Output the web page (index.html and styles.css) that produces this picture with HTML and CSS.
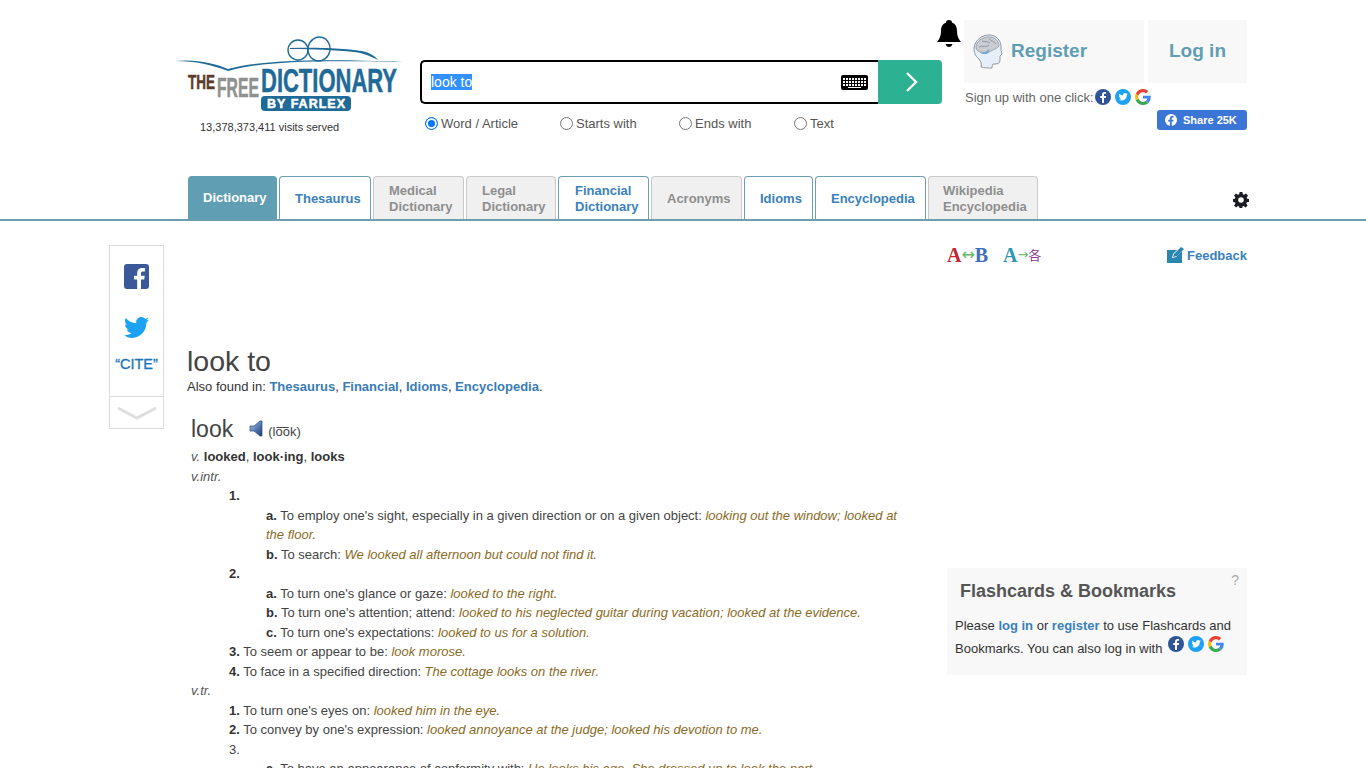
FILE: index.html
```html
<!DOCTYPE html>
<html lang="en">
<head>
<meta charset="utf-8">
<title>look to</title>
<link rel="stylesheet" href="styles.css">
</head>
<body>
<header class="top">
  <div class="brand">
    <svg class="logo" width="230" height="76" viewBox="0 0 230 76">
      <path d="M1 25C22 23 40 27 54 33C85 25 135 22 229 26C140 24 90 25 54 35C38 29 22 25 1 25Z" fill="#1f6a97"/>
      <path d="M116 12C150 11 180 13 192 16C198 18 202 21 204 24C198 21 190 17 180 16C160 14 140 13 116 13Z" fill="#1f6a97"/>
      <circle cx="124" cy="14" r="10" fill="none" stroke="#1f6a97" stroke-width="1.400"/>
      <ellipse cx="145" cy="13" rx="11" ry="12" transform="rotate(12 145 13)" fill="none" stroke="#1f6a97" stroke-width="1.400"/>
      <text x="14" y="53" class="logo-the" textLength="27" lengthAdjust="spacingAndGlyphs">THE</text>
      <text x="43" y="61" class="logo-free" textLength="42" lengthAdjust="spacingAndGlyphs">FREE</text>
      <text x="87" y="56" class="logo-dict" textLength="136" lengthAdjust="spacingAndGlyphs">DICTIONARY</text>
      <rect x="87" y="60" width="90" height="15" rx="4" fill="#1f6a97"/>
      <text x="93" y="72" class="logo-by" textLength="78" lengthAdjust="spacing">BY FARLEX</text>
    </svg>
    <div class="visits">13,378,373,411 visits served</div>
  </div>

  <div class="search">
    <div class="search-row">
      <div class="search-input">
        <span class="selected">look to</span>
        <svg class="kbd" width="27" height="15" viewBox="0 0 27 15">
          <rect width="27" height="15" rx="2" fill="#000"/>
          <path d="M2 3h2v2H2zM5 3h2v2H5zM8 3h2v2H8zM11 3h2v2h-2zM14 3h2v2h-2zM17 3h2v2h-2zM20 3h2v2h-2zM23 3h2v2h-2zM2 6h2v2H2zM5 6h2v2H5zM8 6h2v2H8zM11 6h2v2h-2zM14 6h2v2h-2zM17 6h2v2h-2zM20 6h2v2h-2zM23 6h2v2h-2zM2 9h2v2H2zM5 9h2v2H5zM8 9h2v2H8zM11 9h2v2h-2zM14 9h2v2h-2zM17 9h2v2h-2zM20 9h2v2h-2zM23 9h2v2h-2zM7 12h13v1H7z" fill="#fff"/>
        </svg>
      </div>
      <button class="go" type="button" aria-label="Search">
        <svg width="14" height="22" viewBox="0 0 14 22"><path d="M2 2l9 9-9 9" fill="none" stroke="#fff" stroke-width="2.400"/></svg>
      </button>
    </div>
    <div class="radios">
      <label class="radio r1"><span class="dot on"></span>Word / Article</label>
      <label class="radio r2"><span class="dot"></span>Starts with</label>
      <label class="radio r3"><span class="dot"></span>Ends with</label>
      <label class="radio r4"><span class="dot"></span>Text</label>
    </div>
  </div>

  <svg class="bell" width="26" height="30" viewBox="0 0 26 30">
    <path d="M13 1c-2 0-3 1-3 2.500C6 5 5 8.500 5 12c0 5-1.500 8-4 11h24c-2.500-3-4-6-4-11 0-3.500-1-7-5-8.500C16 2 15 1 13 1z" fill="#000"/>
    <path d="M9.500 25h7c-.5 2-2 3-3.500 3s-3-1-3.500-3z" fill="#000"/>
  </svg>

  <div class="account">
    <div class="account-row">
      <a class="reg">
        <svg class="brain" width="30" height="35" viewBox="0 0 30 35">
          <path d="M8 33c1-3 0-5-2-8C2 22 1 18 1 14 2 6 9 1 16 1c7 0 12 5 12 12 0 3 0 4 1 7l-2 2 0 4c0 3-2 4-5 4l-2 0c-1 2-1 3-1 4-3 0-8 0-11-1z" fill="#e6eef8" stroke="#8f97a3" stroke-width="1"/>
          <path d="M3 14C3 7 9 3 16 3c6 0 10 4 10 9-2 3-5 3-8 5-3 2-7 2-10 1-2 0-4-1-5-4z" fill="#c9ccd0" stroke="#8f97a3" stroke-width=".8"/>
          <path d="M6 13c4-2 7 1 10-2M9 7c3 1 5 0 8 2M16 5c2 2 5 2 7 5" fill="none" stroke="#8b8f96" stroke-width=".9"/>
          <path d="M7 18c3 1 7 0 9-3 1 3-1 5-4 5-2 0-4 0-5-2z" fill="#6fa9d6"/>
        </svg>
        Register
      </a>
      <a class="login">Log in</a>
    </div>
    <div class="oneclick">Sign up with one click:
      <span class="soc">
        <svg class="ic" viewBox="0 0 16 16"><use href="#fb"/></svg>
        <svg class="ic" viewBox="0 0 16 16"><use href="#tw"/></svg>
        <svg class="ic" viewBox="0 0 16 16"><use href="#gg"/></svg>
      </span>
    </div>
    <div class="share-row">
      <a class="share">
        <svg width="12" height="12" viewBox="0 0 16 16"><circle cx="8" cy="8" r="8" fill="#fff"/><path d="M9 16v-6h2l.4-2.500H9V6c0-.8.4-1.300 1.400-1.300h1.100V2.600C11 2.500 10.400 2.400 9.800 2.400 7.800 2.400 6.500 3.600 6.500 5.700v1.800H4.300V10h2.200v6z" fill="#3b76d6"/></svg>
        Share 25K
      </a>
    </div>
  </div>
</header>

<nav class="tabs">
  <a class="tab active t1">Dictionary</a>
  <a class="tab live t2">Thesaurus</a>
  <a class="tab t3">Medical<br>Dictionary</a>
  <a class="tab t4">Legal<br>Dictionary</a>
  <a class="tab live t5">Financial<br>Dictionary</a>
  <a class="tab t6">Acronyms</a>
  <a class="tab live t7">Idioms</a>
  <a class="tab live t8">Encyclopedia</a>
  <a class="tab t9">Wikipedia<br>Encyclopedia</a>
  <svg class="gear" width="16" height="16" viewBox="0 0 16 16">
    <path fill-rule="evenodd" fill="#1c1c24" d="M6.600 0h2.800l.4 2.200 1.300.6L13 1.500 15 3.500l-1.300 1.900.5 1.300 1.800.4v2.800l-2.200.4-.5 1.200 1.300 1.900-2 2-1.900-1.300-1.200.5-.4 2.200H6.600l-.4-2.200-1.300-.5-1.800 1.300-2-2 1.300-1.900-.6-1.200L0 9.900V7.100l1.800-.4.6-1.300L1 3.500l2-2 1.900 1.300 1.300-.6zM8 5.200a2.800 2.800 0 1 0 0 5.600 2.800 2.800 0 0 0 0-5.600z"/>
  </svg>
</nav>

<div class="layout">
  <aside class="rail">
    <div class="rail-main">
      <svg class="rail-fb" width="25" height="25" viewBox="0 0 25 25">
        <rect width="25" height="25" rx="3" fill="#3b5998"/>
        <path d="M17 25v-9.500h3.200l.5-3.800H17V9.300c0-1.100.3-1.800 1.900-1.800h2V4.100c-.4 0-1.500-.1-2.900-.1-2.900 0-4.800 1.700-4.800 5v2.700H10v3.800h3.200V25z" fill="#fff"/>
      </svg>
      <svg class="rail-tw" width="25" height="21" viewBox="0 0 24 20">
        <path d="M24 2.400c-.9.400-1.800.7-2.800.8 1-.6 1.800-1.600 2.200-2.700-1 .6-2 1-3.100 1.200C19.300.7 18 0 16.600 0c-2.700 0-4.900 2.200-4.900 4.900 0 .4 0 .8.100 1.100C7.700 5.800 4.100 3.900 1.700.9 1.200 1.600 1 2.500 1 3.400c0 1.700.9 3.200 2.200 4.100-.8 0-1.600-.2-2.200-.6v.1c0 2.400 1.700 4.400 3.900 4.800-.4.100-.8.200-1.300.2-.3 0-.6 0-.9-.1.600 2 2.400 3.400 4.600 3.400-1.700 1.300-3.800 2.100-6.100 2.100-.4 0-.8 0-1.200-.1C2.200 19.200 4.800 20 7.500 20c9.100 0 14-7.500 14-14v-.6c1-.7 1.800-1.600 2.500-3z" fill="#1da1f2"/>
      </svg>
      <div class="cite">“CITE”</div>
    </div>
    <div class="rail-more">
      <svg width="40" height="16" viewBox="0 0 40 16"><path d="M1 2l19 10L39 2" fill="none" stroke="#dedede" stroke-width="3"/></svg>
    </div>
  </aside>

  <main class="content">
    <div class="tools">
      <span class="trans">
        <span class="ta red">A</span><span class="arr">↔</span><span class="ta blue">B</span>
      </span>
      <span class="trans second">
        <span class="ta teal">A</span><span class="arr arr2">→</span><span class="han">各</span>
      </span>
      <a class="feedback">
        <svg width="17" height="16" viewBox="0 0 17 16">
          <path d="M0 3h10L6 7 5 11l4-1 6-6v12H0z" fill="#2a86ad"/>
          <path d="M7 7l7-7 3 2-7 7-4 1z" fill="#2a86ad"/>
        </svg>
        Feedback
      </a>
    </div>

    <div class="columns">
      <article class="entry">
        <h1 class="term">look to</h1>
        <p class="also">Also found in: <a>Thesaurus</a>, <a>Financial</a>, <a>Idioms</a>, <a>Encyclopedia</a>.</p>

        <div class="defs">
          <h2 class="head">look
            <svg class="speaker" width="15" height="17" viewBox="0 0 15 17">
              <defs><linearGradient id="sp" x1="0" y1="0" x2="1" y2="1"><stop offset="0" stop-color="#a9c8ea"/><stop offset="1" stop-color="#17367d"/></linearGradient></defs>
              <path d="M1 6h4l6-5h2v15h-2l-6-5H1z" fill="url(#sp)" stroke="#2a4a8c" stroke-width=".7"/>
            </svg>
            <span class="pron">(lo͞ok)</span>
          </h2>
          <div class="row"><i>v.</i> <b>looked</b>, <b>look·ing</b>, <b>looks</b></div>
          <div class="row"><i>v.intr.</i></div>
          <div class="row l1"><b>1.</b></div>
          <div class="row l2"><b>a.</b> To employ one's sight, especially in a given direction or on a given object: <em>looking out the window; looked at the floor.</em></div>
          <div class="row l2"><b>b.</b> To search: <em>We looked all afternoon but could not find it.</em></div>
          <div class="row l1"><b>2.</b></div>
          <div class="row l2"><b>a.</b> To turn one's glance or gaze: <em>looked to the right.</em></div>
          <div class="row l2"><b>b.</b> To turn one's attention; attend: <em>looked to his neglected guitar during vacation; looked at the evidence.</em></div>
          <div class="row l2"><b>c.</b> To turn one's expectations: <em>looked to us for a solution.</em></div>
          <div class="row l1"><b>3.</b> To seem or appear to be: <em>look morose.</em></div>
          <div class="row l1"><b>4.</b> To face in a specified direction: <em>The cottage looks on the river.</em></div>
          <div class="row"><i>v.tr.</i></div>
          <div class="row l1"><b>1.</b> To turn one's eyes on: <em>looked him in the eye.</em></div>
          <div class="row l1"><b>2.</b> To convey by one's expression: <em>looked annoyance at the judge; looked his devotion to me.</em></div>
          <div class="row l1">3.</div>
          <div class="row l2"><b>a.</b> To have an appearance of conformity with: <em>He looks his age. She dressed up to look the part.</em></div>
        </div>
      </article>

      <aside class="cards">
        <span class="q">?</span>
        <h3>Flashcards &amp; Bookmarks</h3>
        <p>Please <a>log in</a> or <a>register</a> to use Flashcards and Bookmarks. You can also log in with
          <span class="soc soc-inline">
            <svg class="ic" viewBox="0 0 16 16"><use href="#fb"/></svg>
            <svg class="ic" viewBox="0 0 16 16"><use href="#tw"/></svg>
            <svg class="ic" viewBox="0 0 16 16"><use href="#gg"/></svg>
          </span>
        </p>
      </aside>
    </div>
  </main>
</div>

<svg class="defs-sprite" width="0" height="0" aria-hidden="true">
  <symbol id="fb" viewBox="0 0 16 16">
    <circle cx="8" cy="8" r="8" fill="#2f5597"/>
    <path d="M9 14V9h1.800l.3-2H9V5.800c0-.6.2-1 1-1h1.100V3c-.2 0-.8-.1-1.600-.1C8.100 2.900 7 3.800 7 5.500V7H5.200v2H7v5z" fill="#fff"/>
  </symbol>
  <symbol id="tw" viewBox="0 0 16 16">
    <circle cx="8" cy="8" r="8" fill="#1da1f2"/>
    <path d="M12.800 5c-.4.200-.7.300-1.100.3.400-.2.700-.6.900-1.100-.4.200-.8.400-1.200.5-.4-.4-.9-.6-1.400-.6-1.100 0-1.900.9-1.900 1.900v.4C6.500 6.300 5.100 5.600 4.200 4.400c-.5.900-.2 2 .6 2.600-.3 0-.6-.1-.9-.2 0 .9.700 1.700 1.600 1.900-.3.100-.6.100-.9 0 .2.800 1 1.300 1.800 1.300-.8.600-1.800.9-2.900.8.900.5 1.800.8 2.900.8 3.500 0 5.500-3 5.400-5.600.4-.2.700-.6 1-1z" fill="#fff"/>
  </symbol>
  <symbol id="gg" viewBox="0 0 16 16">
    <path d="M15.700 8.200c0-.6 0-1-.1-1.500H8v2.900h4.400c-.2 1-.7 1.800-1.600 2.400l2.500 1.900c1.500-1.400 2.400-3.400 2.400-5.700z" fill="#4285f4"/>
    <path d="M8 16c2.200 0 4-.7 5.300-1.900l-2.500-2c-.7.500-1.600.8-2.800.8-2.100 0-3.900-1.400-4.600-3.400L.8 11.500C2.100 14.200 4.800 16 8 16z" fill="#34a853"/>
    <path d="M3.400 9.500C3.200 9 3.100 8.500 3.100 8s.1-1 .3-1.500L.8 4.500C.3 5.500 0 6.700 0 8s.3 2.500.8 3.500z" fill="#fbbc05"/>
    <path d="M8 3.200c1.200 0 2.200.4 3 1.200l2.300-2.300C11.900.8 10.100 0 8 0 4.800 0 2.100 1.800.8 4.500l2.600 2C4.100 4.600 5.900 3.200 8 3.200z" fill="#ea4335"/>
  </symbol>
</svg>
</body>
</html>
```
FILE: styles.css
```css
* { box-sizing: border-box; }
html, body { margin: 0; height: 768px; overflow: hidden; }
body { font-family: "Liberation Sans", Arial, sans-serif; background: #fff; color: #444; font-size: 13px; }
a { text-decoration: none; }
h1, h2, h3, p { margin: 0; font-weight: normal; }

/* header */
.top { height: 176px; display: flex; align-items: flex-start; padding-left: 174px; position: relative; }
.brand { width: 246px; padding-top: 36px; }
.logo { display: block; }
.logo text { font-family: "Liberation Sans", Arial, sans-serif; font-weight: bold; stroke-width: .5px; }
.logo-the { font-size: 20px; fill: #5a3c2c; stroke: #5a3c2c; }
.logo-free { font-size: 28px; fill: #8f918e; stroke: #8f918e; }
.logo-dict { font-size: 33.500px; fill: #1f6a97; stroke: #1f6a97; }
.logo-by { font-size: 12.500px; fill: #fff; stroke: #fff; }
.visits { font-size: 11px; color: #333; margin: 9px 0 0 26px; line-height: 12px; }

.search { width: 523px; padding-top: 60px; }
.search-row { display: flex; height: 44px; }
.search-input { width: 458px; border: 2px solid #000; border-right: 0; border-radius: 5px 0 0 5px; display: flex; align-items: center; justify-content: space-between; padding: 0 10px 0 9px; font-size: 14px; }
.selected { background: #3390ff; color: #fff; line-height: 16px; }
.kbd { display: block; }
.go { width: 64px; border: 0; background: #2db193; border-radius: 0 4px 4px 0; padding: 0 0 0 4px; display: flex; align-items: center; justify-content: center; }
.radios { display: flex; height: 20px; margin-top: 9px; font-size: 13px; color: #555; }
.radio { display: flex; align-items: center; gap: 3px; }
.r1 { margin-left: 5px; width: 135px; }
.r2 { width: 119px; }
.r3 { width: 115px; }
.dot { width: 13px; height: 13px; border-radius: 50%; border: 1px solid #767676; background: #fff; }
.dot.on { border: 1px solid #0075ff; background: #0075ff; box-shadow: inset 0 0 0 2px #fff; }

.bell { margin: 19px 0 0 -7px; width: 26px; flex: none; }
.account { width: 283px; margin: 20px 0 0 2px; }
.account-row { display: flex; gap: 4px; height: 63px; }
.reg, .login { background: #f8f8f8; color: #5f9eb3; font-weight: bold; font-size: 19px; display: flex; align-items: center; padding-bottom: 1px; }
.reg { width: 180px; padding-left: 9px; gap: 8px; }
.login { width: 99px; justify-content: center; }
.brain { flex: none; }
.oneclick { display: flex; align-items: center; gap: 1px; font-size: 13px; color: #666; margin-top: 6px; height: 16px; padding-left: 1px; }
.soc { display: inline-flex; gap: 4px; }
.ic { width: 16px; height: 16px; display: block; }
.share-row { display: flex; justify-content: flex-end; margin-top: 5px; }
.share { width: 90px; height: 20px; background: #3b76d6; border-radius: 3px; color: #fff; font-size: 11px; font-weight: bold; display: flex; align-items: center; gap: 6px; padding-left: 8px; }

/* tabs */
.tabs { height: 45px; padding-left: 188px; display: flex; gap: 2px; border-bottom: 2px solid #6d9db0; position: relative; }
.tab { height: 43px; border: 1px solid #c9c9c9; border-bottom: 0; border-radius: 4px 4px 0 0; background: #f0f0f0; color: #8e8e8e; font-weight: bold; font-size: 13px; line-height: 16px; display: flex; align-items: center; padding: 2px 0 0 15px; }
.tab.live { background: #fff; border-color: #6d9db0; color: #3a81bd; }
.tab.active { background: #5f9eb3; border-color: #5f9eb3; color: #fff; padding: 0 0 0 14px; }
.t1 { width: 89px; }
.t2 { width: 92px; }
.t3 { width: 91px; }
.t4 { width: 90px; }
.tab.t5 { width: 91px; padding-left: 16px; }
.t6 { width: 91px; }
.t7 { width: 69px; }
.t8 { width: 111px; }
.tab.t9 { width: 110px; padding-left: 14px; }
.gear { margin: 16px 0 0 193px; flex: none; }

/* body */
.layout { display: flex; align-items: flex-start; padding: 24px 0 0 109px; }
.rail { width: 55px; flex: none; border: 1px solid #dcdcdc; display: flex; flex-direction: column; }
.rail-main { height: 150px; padding-top: 18px; display: flex; flex-direction: column; align-items: center; }
.rail-fb { display: block; }
.rail-tw { display: block; margin-top: 28px; }
.cite { margin-top: 18px; color: #1b74b8; font-size: 14.500px; -webkit-text-stroke: .3px #1b74b8; white-space: nowrap; }
.rail-more { height: 32px; padding-top: 2px; border-top: 1px solid #dcdcdc; display: flex; align-items: center; justify-content: center; }
.rail-more svg { display: block; }

.content { width: 1060px; margin-left: 23px; }
.tools { height: 30px; display: flex; align-items: center; padding-left: 760px; margin-top: -5px; position: relative; }
.trans { display: inline-flex; align-items: center; width: 56px; font-family: "Liberation Serif", serif; font-weight: bold; font-size: 20px; line-height: 20px; }
.trans.second { width: 164px; }
.arr { font-family: "DejaVu Sans", sans-serif; font-size: 16px; font-weight: normal; color: #62b862; }
.arr2 { font-size: 13px; }
.red { color: #c3272f; }
.blue { color: #3f6fb7; }
.teal { color: #2a98b3; }
.han { font-family: "Noto Sans CJK SC", sans-serif; font-size: 13px; font-weight: normal; color: #8d3c8f; }
.feedback { display: inline-flex; align-items: center; gap: 3px; color: #3a81bd; font-weight: bold; font-size: 13px; white-space: nowrap; }

.columns { display: flex; align-items: flex-start; }
.entry { width: 760px; padding-top: 76px; flex: none; }
.term { font-size: 28.500px; line-height: 30px; color: #444; }
.also { font-size: 13px; line-height: 18px; color: #333; margin-top: 2px; }
.also a { color: #3a7cb5; font-weight: bold; }
.defs { padding-left: 4px; margin-top: 15px; width: 716px; }
.head { font-size: 23px; line-height: 30px; color: #444; display: flex; align-items: center; }
.speaker { margin: -2px 0 0 16px; }
.pron { font-size: 13px; margin: 6px 0 0 4px; color: #444; }
.row { font-size: 13px; line-height: 19.500px; color: #444; }
.row i { color: #555; }
.row b { color: #333; }
.row em { color: #8a6a25; font-style: italic; }
.l1 { padding-left: 38px; }
.l2 { padding-left: 75px; }

.cards { width: 300px; height: 107px; margin-top: 298px; background: #f8f8f8; position: relative; padding: 12px 8px 0 8px; color: #333; flex: none; }
.cards h3 { font-size: 18px; font-weight: bold; color: #555; line-height: 22px; padding-left: 5px; margin-bottom: 12px; }
.cards p { font-size: 13px; line-height: 23px; }
.cards a { color: #3a81bd; font-weight: bold; }
.q { position: absolute; right: 8px; top: 4px; color: #aaa; font-size: 14px; }
.soc-inline { vertical-align: 1px; margin: -3px 0 0 2px; }
.defs-sprite { position: absolute; }
```
